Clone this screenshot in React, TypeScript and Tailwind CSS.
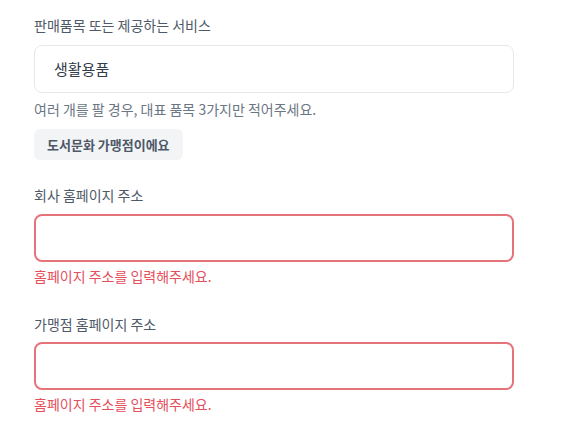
export default function App() {
  return (
    <div
      className="min-h-screen bg-white pl-[34px] pt-[15px] w-[571px]"
      style={{ fontFamily: '"Noto Sans CJK KR", "Noto Sans", sans-serif' }}
    >
      <div className="w-[480px] flex flex-col">
        <label className="text-[14px] leading-5 text-[#4e5968]">판매품목 또는 제공하는 서비스</label>
        <div className="mt-[10px] h-12 rounded-lg border border-[#e5e8eb] flex items-center px-[19px] text-[15px] text-[#333d4b]">
          생활용품
        </div>
        <p className="mt-[6px] text-[14px] leading-5 text-[#6b7684]">
          여러 개를 팔 경우, 대표 품목 3가지만 적어주세요.
        </p>
        <div className="mt-[10px]">
          <button className="h-[31px] px-[13px] rounded-md bg-[#f2f4f6] text-[13px] font-bold text-[#4e5968]">
            도서문화 가맹점이에요
          </button>
        </div>

        <label className="mt-[25px] text-[14px] leading-5 text-[#4e5968]">회사 홈페이지 주소</label>
        <div className="mt-[9px] h-12 rounded-lg border-2 border-[#e5737b]" />
        <p className="mt-1 text-[14px] leading-5 text-[#e5505c]">홈페이지 주소를 입력해주세요.</p>

        <label className="mt-[28px] text-[14px] leading-5 text-[#4e5968]">가맹점 홈페이지 주소</label>
        <div className="mt-[8px] h-12 rounded-lg border-2 border-[#e5737b]" />
        <p className="mt-1 text-[14px] leading-5 text-[#e5505c]">홈페이지 주소를 입력해주세요.</p>
      </div>
    </div>
  );
}
